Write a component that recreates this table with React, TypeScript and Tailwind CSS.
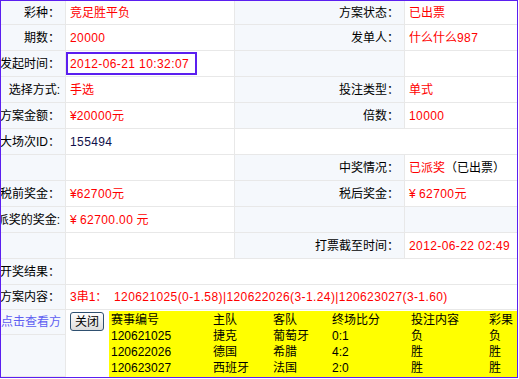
import type { ReactNode } from 'react';

const FONT = { fontFamily: '"Liberation Sans", "Noto Sans CJK SC", sans-serif' };

function L({ children, className = '' }: { children?: ReactNode; className?: string }) {
  return (
    <div className={`flex items-center justify-end overflow-hidden whitespace-nowrap border-r border-b border-[#e8e8e8] bg-[#f5f8fc] pr-[5px] text-black ${className}`}>
      {children}
    </div>
  );
}

function V({ children, className = '' }: { children?: ReactNode; className?: string }) {
  return (
    <div className={`flex items-center overflow-hidden whitespace-nowrap border-b border-[#e8e8e8] bg-white pl-[4px] text-[#ff0000] ${className}`}>
      <span className="whitespace-pre">{children}</span>
    </div>
  );
}

// digits in the original render a touch wider than Arial
function N({ children }: { children: ReactNode }) {
  return <span className="tracking-[0.4px]">{children}</span>;
}

const matches = [
  { id: '120621025', home: '捷克', away: '葡萄牙', score: '0:1', bet: '负', res: '负' },
  { id: '120622026', home: '德国', away: '希腊', score: '4:2', bet: '胜', res: '胜' },
  { id: '120623027', home: '西班牙', away: '法国', score: '2:0', bet: '胜', res: '胜' },
];

export default function App() {
  return (
    <div className="h-[379px] w-[519px] bg-white text-[12px] leading-none" style={FONT}>
      <div className="grid h-[378px] w-[518px] grid-cols-[65px_169px_170px_112px] grid-rows-[24px_repeat(10,26px)_25px_67px] border border-[#5b1ff0]">
        {/* row 1 */}
        <L>彩种：</L>
        <V className="border-r">竞足胜平负</V>
        <L>方案状态：</L>
        <V>已出票</V>
        {/* row 2 */}
        <L>期数：</L>
        <V className="border-r"><N>20000</N></V>
        <L>发单人：</L>
        <V>什么什么<N>987</N></V>
        {/* row 3 */}
        <L>发起时间：</L>
        <div className="flex items-center border-r border-b border-[#e8e8e8] bg-white">
          <div className="flex h-[23px] w-[131px] items-center border-2 border-[#5b1ff0] pl-[2px] text-[#ff0000]">
            <N>2012-06-21 10:32:07</N>
          </div>
        </div>
        <L />
        <V />
        {/* row 4 */}
        <L>选择方式:</L>
        <V className="border-r">手选</V>
        <L>投注类型：</L>
        <V>单式</V>
        {/* row 5 */}
        <L>方案金额：</L>
        <V className="border-r">¥<N>20000</N>元</V>
        <L>倍数：</L>
        <V><N>10000</N></V>
        {/* row 6 */}
        <L>大场次ID：</L>
        <V className="border-r !text-[#10104a]"><N>155494</N></V>
        <V className="col-span-2" />
        {/* row 7 */}
        <L />
        <V className="border-r" />
        <L>中奖情况：</L>
        <V>
          已派奖<span className="text-black">（已出票）</span>
        </V>
        {/* row 8 */}
        <L>税前奖金：</L>
        <V className="border-r">¥<N>62700</N>元</V>
        <L>税后奖金：</L>
        <V>{'¥ '}<N>62700</N>元</V>
        {/* row 9 */}
        <L>派奖的奖金:</L>
        <V className="border-r">{'¥ '}<N>62700.00</N>{' 元'}</V>
        <L />
        <L className="border-r-0" />
        {/* row 10 */}
        <L />
        <V className="border-r" />
        <L>打票截至时间：</L>
        <V><N>2012-06-22 02:49</N></V>
        {/* row 11 */}
        <L>开奖结果：</L>
        <V className="col-span-3" />
        {/* row 12 */}
        <L>方案内容：</L>
        <V className="col-span-3">
          {'3串1：  '}<N>120621025(0-1.58)|120622026(3-1.24)|120623027(3-1.60)</N>
        </V>
        {/* row 13 */}
        <div className="flex flex-col border-r border-[#e8e8e8] bg-[#f5f8fc]">
          <div className="flex h-[25px] items-center overflow-hidden whitespace-nowrap border-b border-[#e8e8e8] text-[#5e5ef2]">
            点击查看方
          </div>
          <div className="flex-1 border-b border-[#e8e8e8]" />
        </div>
        <div className="col-span-3 flex items-start bg-white">
          <button className="ml-[4px] mt-[2px] h-[19px] w-[34px] rounded-[3px] border border-[#2f5070] bg-gradient-to-b from-white to-[#dcdcdc] text-[12px] leading-none text-black">
            关闭
          </button>
          <div className="ml-[5px] mt-px h-[66px] flex-1 bg-[#ffff00] pl-[2px] text-black">
            <div className="grid h-[17px] grid-cols-[102px_60px_59px_79px_78px_1fr] items-center">
              <span>赛事编号</span>
              <span>主队</span>
              <span>客队</span>
              <span>终场比分</span>
              <span>投注内容</span>
              <span>彩果</span>
            </div>
            {matches.map(m => (
              <div key={m.id} className="grid h-[16px] grid-cols-[102px_60px_59px_79px_78px_1fr] items-center">
                <span>{m.id}</span>
                <span>{m.home}</span>
                <span>{m.away}</span>
                <span>{m.score}</span>
                <span>{m.bet}</span>
                <span>{m.res}</span>
              </div>
            ))}
          </div>
        </div>
      </div>
    </div>
  );
}
